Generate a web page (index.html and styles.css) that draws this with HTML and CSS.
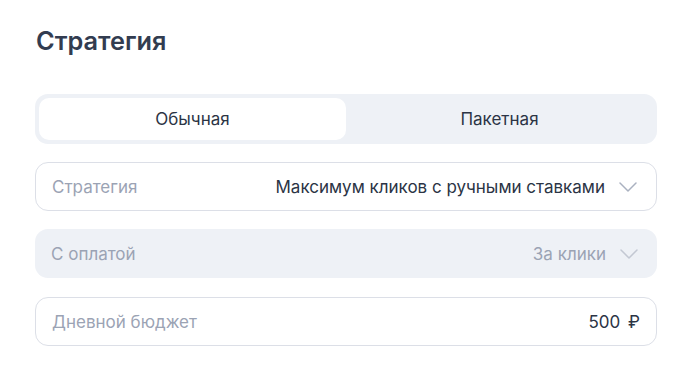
FILE: index.html
```html
<!DOCTYPE html>
<html lang="ru">
<head>
<meta charset="utf-8">
<link rel="stylesheet" href="styles.css">
</head>
<body>
<div class="page">
  <h1 class="title">Стратегия</h1>
  <div class="segmented">
    <div class="seg seg-active">Обычная</div>
    <div class="seg">Пакетная</div>
  </div>
  <div class="field field-outline">
    <span class="label">Стратегия</span>
    <span class="value">Максимум кликов с ручными ставками</span>
    <svg class="chev" width="18" height="10" viewBox="0 0 18 10"><path d="M1 1l8 8 8-8" fill="none" stroke="#aab1c0" stroke-width="1.5" stroke-linecap="round" stroke-linejoin="round"/></svg>
  </div>
  <div class="field field-filled">
    <span class="label">С оплатой</span>
    <span class="value value-muted">За клики</span>
    <svg class="chev" width="18" height="10" viewBox="0 0 18 10"><path d="M1 1l8 8 8-8" fill="none" stroke="#c3c8d3" stroke-width="1.5" stroke-linecap="round" stroke-linejoin="round"/></svg>
  </div>
  <div class="field field-outline field-last">
    <span class="label">Дневной бюджет</span>
    <span class="value value-money">500&nbsp;₽</span>
  </div>
</div>
</body>
</html>
```
FILE: styles.css
```css
html, body { margin: 0; padding: 0; background: #ffffff; }
body { font-family: Inter, "Noto Sans", sans-serif; color: #2b3445; }
.page { padding: 24px 24px 0 35px; display: flex; flex-direction: column; }
.title { margin: 0 0 0 1px; font-size: 25.3px; font-weight: 600; color: #323c50; line-height: 34px; }
.segmented { margin-top: 36px; height: 50px; box-sizing: border-box; padding: 4px; background: #eef1f6; border-radius: 13px; display: flex; }
.seg { flex: 1; display: flex; align-items: center; justify-content: center; font-size: 17px; color: #2b3445; border-radius: 10px; }
.seg-active { background: #ffffff; }
.field { margin-top: 18px; height: 49px; box-sizing: border-box; border-radius: 13px; display: flex; align-items: center; padding: 0 19px 0 16px; font-size: 17px; }
.field-last { margin-top: 19px; }
.field-outline { border: 1px solid #dcdfe7; }
.field-filled { background: #eef1f6; }
.label { color: #9ba3b4; flex: 1; }
.value { color: #2b3445; }
.value-muted { color: #9ba3b4; }
.value-money { margin-right: -3px; word-spacing: 3px; }
.chev { margin-left: 14px; }
```
